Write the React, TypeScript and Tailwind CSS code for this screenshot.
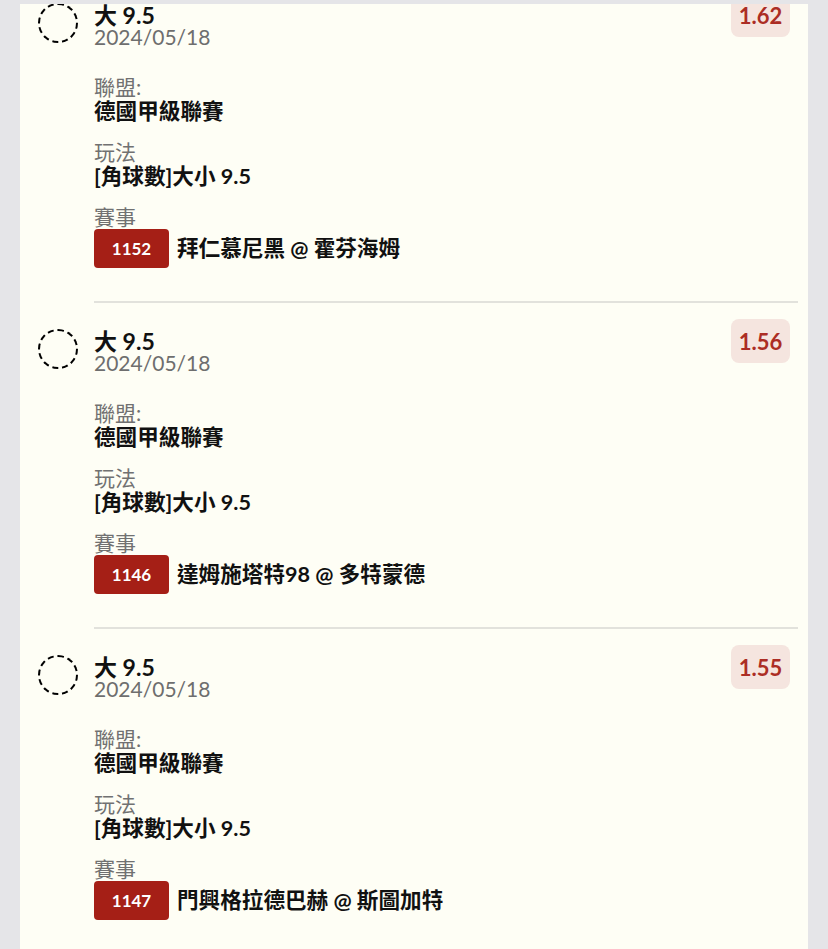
import React from "react";

type Item = { odds: string; code: string; match: string };

const items: Item[] = [
  { odds: "1.62", code: "1152", match: "拜仁慕尼黑 @ 霍芬海姆" },
  { odds: "1.56", code: "1146", match: "達姆施塔特98 @ 多特蒙德" },
  { odds: "1.55", code: "1147", match: "門興格拉德巴赫 @ 斯圖加特" },
];

const font = {
  fontFamily: '"Lato", "Noto Sans CJK TC", "Noto Sans", sans-serif',
};

function Row({ item, last }: { item: Item; last: boolean }) {
  return (
    <div className="flex">
      <div className="mt-[26px] mr-4 h-10 w-10 shrink-0 rounded-full border-2 border-dashed border-black" />
      <div
        className={
          "flex-1 pt-4 pb-[33px] " +
          (last ? "" : "border-b-2 border-[#e2e2dc]")
        }
      >
        <div className="flex items-start justify-between">
          <div className="mt-[11px]">
            <div className="text-[23px] leading-[22px] font-bold text-[#111]">大 9.5</div>
            <div className="text-[21px] leading-[22px] text-[#6e6e6e]">2024/05/18</div>
          </div>
          <div className="mr-2 flex h-[44px] w-[59px] items-center justify-center rounded-lg bg-[#f5e5df] text-[22px] font-bold text-[#ac2d24]">
            {item.odds}
          </div>
        </div>
        <div className="mt-[27px]">
          <div className="text-[21px] leading-6 text-[#717171]">聯盟:</div>
          <div className="text-[21.6px] leading-6 font-bold text-[#111]">德國甲級聯賽</div>
        </div>
        <div className="mt-[17px]">
          <div className="text-[21px] leading-6 text-[#717171]">玩法</div>
          <div className="text-[21.6px] leading-6 font-bold text-[#111]">[角球數]大小 9.5</div>
        </div>
        <div className="mt-[17px]">
          <div className="text-[21px] leading-6 text-[#717171]">賽事</div>
          <div className="flex items-center">
            <div className="flex h-[39px] w-[75px] items-center justify-center rounded-[4px] bg-[#a51f16] text-[17px] font-bold text-white">
              {item.code}
            </div>
            <div className="ml-2 text-[21.6px] font-bold text-[#111]">{item.match}</div>
          </div>
        </div>
      </div>
    </div>
  );
}

export default function App() {
  return (
    <div className="min-h-screen bg-[#e5e5e8] pt-1" style={font}>
      <div className="mx-5 overflow-hidden bg-[#fefef5] pl-[18px] pr-[10px]">
        <div className="mt-[-27px]">
          {items.map((it, i) => (
            <Row key={it.code} item={it} last={i === items.length - 1} />
          ))}
        </div>
      </div>
    </div>
  );
}
